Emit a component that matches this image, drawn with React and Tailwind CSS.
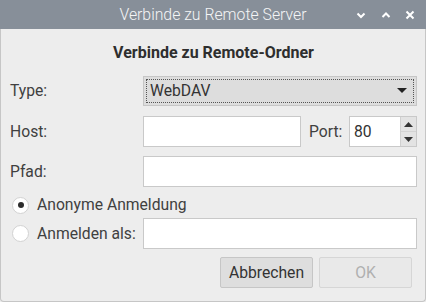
import React from 'react';

const font = { fontFamily: 'Roboto, "Liberation Sans", sans-serif' };

const Input = ({ className = '', children }) => (
  <div className={`h-[31px] bg-white border border-[#c9c9c9] flex items-center px-[5px] text-[#333] ${className}`}>
    {children}
  </div>
);

const Radio = ({ checked }) => (
  <div className="w-[17px] h-[17px] rounded-full bg-white border border-[#d2d2d2] flex items-center justify-center shrink-0">
    {checked && <div className="w-[6px] h-[6px] rounded-full bg-[#2c2c2c]" />}
  </div>
);

const App = () => {
  return (
    <div className="w-[426px] h-[302px] flex flex-col bg-[#ededed] overflow-hidden" style={font}>
      {/* title bar */}
      <div className="h-[29px] bg-[#878f99] flex items-center relative shrink-0">
        <div className="flex-1 text-center text-[15.8px] font-light text-[#f4f5f6]">
          Verbinde zu Remote Server
        </div>
        <div className="absolute right-0 top-0 h-full flex items-center">
          <svg width="10" height="8" viewBox="0 0 10 8" className="mr-[15px]">
            <path d="M1.5 2.5 L5 6 L8.5 2.5" stroke="#fff" strokeWidth="2" fill="none" />
          </svg>
          <svg width="10" height="8" viewBox="0 0 10 8" className="mr-[14px]">
            <path d="M1.5 6 L5 2.5 L8.5 6" stroke="#fff" strokeWidth="2" fill="none" />
          </svg>
          <svg width="10" height="10" viewBox="0 0 10 10" className="mr-[11px]">
            <path d="M1.5 1.5 L8.5 8.5 M8.5 1.5 L1.5 8.5" stroke="#fff" strokeWidth="2" fill="none" />
          </svg>
        </div>
      </div>

      {/* body */}
      <div className="flex-1 flex flex-col border-x border-b border-[#c6c6c6] rounded-b-[4px] pl-[9px] pr-[8px] text-[15.7px] text-[#404040]">
        <div className="mt-[14px] h-[20px] text-center text-[16px] font-bold text-[#2e2e2e] leading-[20px]">
          Verbinde zu Remote-Ordner
        </div>

        {/* Type */}
        <div className="mt-[13px] flex items-center h-[30px]">
          <div className="w-[133px]">Type:</div>
          <div className="flex-1 h-[30px] bg-[#dddddd] border border-[#c6c6c6] p-[2px]">
            <div className="h-full border border-dotted border-[#555] flex items-center pl-[3px] pr-[6px]">
              <span className="flex-1 text-[#333]">WebDAV</span>
              <svg width="10" height="6" viewBox="0 0 10 6">
                <path d="M0 0 L10 0 L5 5 Z" fill="#222" />
              </svg>
            </div>
          </div>
        </div>

        {/* Host / Port */}
        <div className="mt-[10px] flex items-center">
          <div className="w-[133px]">Host:</div>
          <Input className="w-[158px]" />
          <div className="w-[48px] pl-[8px]">Port:</div>
          <div className="flex-1 flex h-[31px] border border-[#c9c9c9]">
            <div className="flex-1 bg-white flex items-center pl-[4px] text-[#333]">80</div>
            <div className="w-[16px] bg-[#e3e3e3] border-l border-[#d0d0d0] flex flex-col">
              <div className="flex-1 flex items-center justify-center border-b border-[#d3d3d3]">
                <svg width="9" height="5" viewBox="0 0 9 5"><path d="M0 5 L9 5 L4.5 0 Z" fill="#333" /></svg>
              </div>
              <div className="flex-1 flex items-center justify-center">
                <svg width="9" height="5" viewBox="0 0 9 5"><path d="M0 0 L9 0 L4.5 5 Z" fill="#333" /></svg>
              </div>
            </div>
          </div>
        </div>

        {/* Pfad */}
        <div className="mt-[9px] flex items-center">
          <div className="w-[133px]">Pfad:</div>
          <Input className="flex-1" />
        </div>

        {/* radio 1 */}
        <div className="mt-[7px] h-[22px] flex items-center pl-[2px]">
          <Radio checked />
          <span className="ml-[8px]">Anonyme Anmeldung</span>
        </div>

        {/* radio 2 */}
        <div className="mt-[2px] flex items-center">
          <div className="w-[133px] flex items-center pl-[2px]">
            <Radio />
            <span className="ml-[8px]">Anmelden als:</span>
          </div>
          <Input className="flex-1" />
        </div>

        {/* buttons */}
        <div className="mt-[8px] flex justify-end gap-[6px] pr-[5px]">
          <div className="w-[93px] h-[31px] bg-[#dedede] border border-[#c6c6c6] rounded-[2px] flex items-center justify-center text-[#333]">
            Abbrechen
          </div>
          <div className="w-[93px] h-[31px] bg-[#e9e9e9] border border-[#d6d6d6] rounded-[2px] flex items-center justify-center text-[#b0b0b0]">
            OK
          </div>
        </div>
      </div>
    </div>
  );
};

export default App;
